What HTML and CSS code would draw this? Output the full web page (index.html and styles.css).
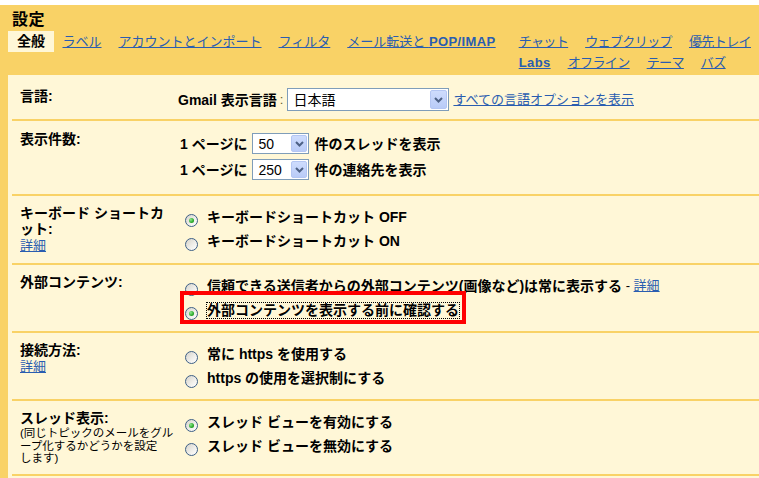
FILE: index.html
```html
<!DOCTYPE html>
<html lang="ja">
<head>
<meta charset="utf-8">
<title>設定</title>
<link rel="stylesheet" href="styles.css">
</head>
<body>
<div class="settings">
  <h1 class="title">設定</h1>
  <nav class="tabs">
    <span class="tab tab-current">全般</span>
    <a class="tab" href="#">ラベル</a>
    <a class="tab" href="#">アカウントとインポート</a>
    <a class="tab" href="#">フィルタ</a>
    <a class="tab" href="#">メール転送と <b>POP/IMAP</b></a>
    <div class="tab-group">
      <div class="tab-row">
        <a class="tab" href="#">チャット</a>
        <a class="tab" href="#">ウェブクリップ</a>
        <a class="tab" href="#">優先トレイ</a>
      </div>
      <div class="tab-row">
        <a class="tab" href="#"><b>Labs</b></a>
        <a class="tab" href="#">オフライン</a>
        <a class="tab" href="#">テーマ</a>
        <a class="tab" href="#">バズ</a>
      </div>
    </div>
  </nav>

  <div class="panel">
    <div class="row row-lang">
      <div class="label">言語:</div>
      <div class="content line">
        <span class="strong">Gmail 表示言語</span><span class="colon">:</span>
        <span class="select select-wide"><span class="select-value">日本語</span><span class="select-btn"><svg width="9" height="6" viewBox="0 0 9 6"><polyline points="1,1 4.5,4.5 8,1" fill="none" stroke="#4d6185" stroke-width="2"/></svg></span></span>
        <a class="link" href="#">すべての言語オプションを表示</a>
      </div>
    </div>

    <div class="row row-count">
      <div class="label">表示件数:</div>
      <div class="content count">
        <div class="line">
          <span class="strong num">1 ページに</span>
          <span class="select select-small"><span class="select-value">50</span><span class="select-btn"><svg width="9" height="6" viewBox="0 0 9 6"><polyline points="1,1 4.5,4.5 8,1" fill="none" stroke="#4d6185" stroke-width="2"/></svg></span></span>
          <span class="strong">件のスレッドを表示</span>
        </div>
        <div class="line">
          <span class="strong num">1 ページに</span>
          <span class="select select-small"><span class="select-value">250</span><span class="select-btn"><svg width="9" height="6" viewBox="0 0 9 6"><polyline points="1,1 4.5,4.5 8,1" fill="none" stroke="#4d6185" stroke-width="2"/></svg></span></span>
          <span class="strong">件の連絡先を表示</span>
        </div>
      </div>
    </div>

    <div class="row">
      <div class="label">キーボード ショートカ<br>ット:<br><a class="link" href="#">詳細</a></div>
      <div class="content">
        <div class="option"><span class="radio checked"></span><span class="strong">キーボードショートカット OFF</span></div>
        <div class="option"><span class="radio"></span><span class="strong">キーボードショートカット ON</span></div>
      </div>
    </div>

    <div class="row">
      <div class="label">外部コンテンツ:</div>
      <div class="content">
        <div class="option"><span class="radio"></span><span class="strong">信頼できる送信者からの外部コンテンツ(画像など)は常に表示する</span>&nbsp;-&nbsp;<a class="link" href="#">詳細</a></div>
        <div class="option option-marked"><span class="radio checked"></span><span class="strong focused">外部コンテンツを表示する前に確認する</span><span class="annot"></span></div>
      </div>
    </div>

    <div class="row">
      <div class="label">接続方法:<br><a class="link" href="#">詳細</a></div>
      <div class="content">
        <div class="option"><span class="radio"></span><span class="strong">常に https を使用する</span></div>
        <div class="option"><span class="radio"></span><span class="strong">https の使用を選択制にする</span></div>
      </div>
    </div>

    <div class="row">
      <div class="label">スレッド表示:<div class="hint">(同じトピックのメールをグル<br>ープ化するかどうかを設定<br>します)</div></div>
      <div class="content">
        <div class="option"><span class="radio checked"></span><span class="strong">スレッド ビューを有効にする</span></div>
        <div class="option"><span class="radio"></span><span class="strong">スレッド ビューを無効にする</span></div>
      </div>
    </div>
  </div>
</div>
</body>
</html>
```

FILE: styles.css
```css
html, body {
  margin: 0;
  padding: 0;
  background: #ffffff;
}

body {
  font-family: "Liberation Sans", "Noto Sans CJK JP", sans-serif;
  font-size: 13px;
  line-height: 16px;
  color: #000;
  overflow: hidden;
}

.settings {
  margin-top: 5px;
  background: #f9d266;
  padding-top: 5px;
  min-height: 480px;
}

.title {
  margin: 0 0 1px 12px;
  font-size: 16px;
  line-height: 20px;
  font-weight: bold;
  letter-spacing: 0.5px;
}

.tabs {
  display: flex;
  align-items: flex-start;
  padding-left: 8px;
  white-space: nowrap;
}

.tab {
  display: inline-block;
  padding: 0 8.5px;
  line-height: 21px;
  color: #2a5db0;
  text-decoration: underline;
  text-underline-offset: 1px;
}

.tab b {
  font-weight: bold;
  letter-spacing: 0.4px;
}

.tab-current {
  background: #fff7d7;
  color: #000;
  font-weight: bold;
  font-size: 14px;
  text-decoration: none;
  padding: 0 9px 0 9px;
}

.tab-group {
  display: flex;
  flex-direction: column;
  margin-left: 6px;
}

.tab-group .tab {
  letter-spacing: -0.6px;
}

.tab-group .tab b {
  letter-spacing: 0.4px;
}

.tab-row {
  display: flex;
}

.panel {
  margin: 2px 0 0 8px;
  background: #fff7d7;
  padding-bottom: 20px;
}

.row {
  display: grid;
  grid-template-columns: 158px 1fr;
  margin-left: 4px;
  padding: 9px 0 9px 8px;
  border-bottom: 2px solid #f9d266;
}

.row-lang {
  padding: 13px 0 8px 8px;
}

.row-count {
  padding: 10px 0 14px 8px;
}

.label {
  font-weight: bold;
  font-size: 14px;
  padding-right: 8px;
}

.label .link {
  font-weight: normal;
  font-size: 13px;
}

.hint {
  font-weight: normal;
  font-size: 11.5px;
  line-height: 12.5px;
  margin-top: 1px;
  white-space: nowrap;
}

.strong {
  font-weight: bold;
  font-size: 14px;
}

.colon {
  color: #6b5a2a;
}

.link {
  color: #2a5db0;
  text-decoration: underline;
  text-underline-offset: 1px;
}

.line {
  display: flex;
  align-items: center;
  gap: 5px;
}

.row-lang .line {
  gap: 4px;
}

.row-lang .colon {
  margin-left: -1px;
}

.count {
  display: flex;
  flex-direction: column;
  gap: 5px;
  padding-top: 2px;
}

.num {
  margin-left: 2px;
}

.select {
  display: inline-flex;
  box-sizing: border-box;
  border: 1px solid #7f9db9;
  background: #fff;
  padding: 1px;
}

.select-wide {
  width: 162px;
  height: 23px;
}

.select-small {
  width: 57px;
  height: 21px;
}

.select-value {
  flex: 1;
  display: flex;
  align-items: center;
  padding-left: 4px;
  font-size: 14px;
}

.select-btn {
  width: 17px;
  box-sizing: border-box;
  display: flex;
  align-items: center;
  justify-content: center;
  background: linear-gradient(#cedcfd, #b9cbf7);
  border: 1px solid #b4c6f3;
  border-radius: 2px;
}

.select-small .select-btn {
  width: 16px;
}

.option {
  display: flex;
  align-items: center;
  height: 24px;
  white-space: nowrap;
}

.radio {
  flex: none;
  width: 13px;
  height: 13px;
  box-sizing: border-box;
  border-radius: 50%;
  border: 1px solid #3d5f86;
  background: linear-gradient(135deg, #d6d3ca 0%, #f1f0ec 60%, #ffffff 100%);
  margin: 6px 9px 0 7px;
  display: flex;
  align-items: center;
  justify-content: center;
}

.radio.checked::after {
  content: "";
  width: 5px;
  height: 5px;
  border-radius: 50%;
  background: radial-gradient(circle at 35% 35%, #8ee88e 0%, #2aa82a 60%, #1b8a1b 100%);
}

.option-marked {
  position: relative;
}

.focused {
  display: inline-block;
  line-height: 15px;
  outline: 1px dotted #000;
}

.annot {
  position: absolute;
  left: 2px;
  top: -7px;
  width: 286px;
  height: 33px;
  box-sizing: border-box;
  border: 4px solid #ff0000;
  pointer-events: none;
}
```
